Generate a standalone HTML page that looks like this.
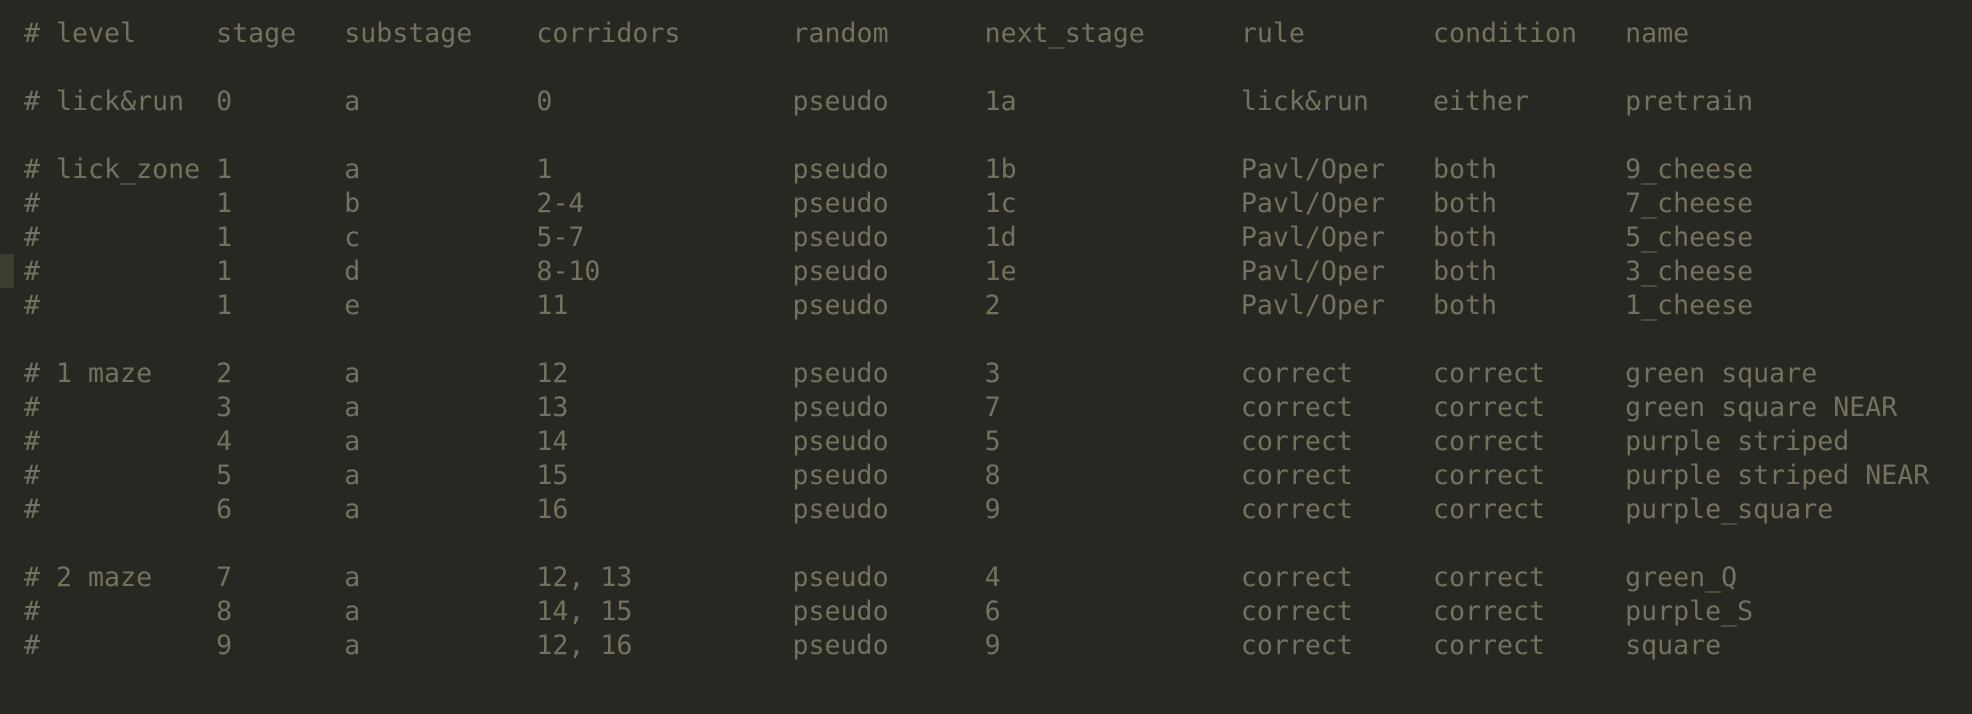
<!DOCTYPE html>
<html><head><meta charset="utf-8"><style>
html,body{margin:0;padding:0;background:#272822;width:1972px;height:714px;overflow:hidden;}
pre{margin:0;position:absolute;left:24px;top:17px;font-family:"DejaVu Sans Mono","Liberation Mono",monospace;font-size:26.6px;line-height:34px;color:#75715e;}
.g{position:absolute;left:0;top:254px;width:14px;height:34px;background:#3e3d32;}
</style></head><body>
<div class="g"></div>
<pre># level     stage   substage    corridors       random      next_stage      rule        condition   name

# lick&amp;run  0       a           0               pseudo      1a              lick&amp;run    either      pretrain

# lick_zone 1       a           1               pseudo      1b              Pavl/Oper   both        9_cheese
#           1       b           2-4             pseudo      1c              Pavl/Oper   both        7_cheese
#           1       c           5-7             pseudo      1d              Pavl/Oper   both        5_cheese
#           1       d           8-10            pseudo      1e              Pavl/Oper   both        3_cheese
#           1       e           11              pseudo      2               Pavl/Oper   both        1_cheese

# 1 maze    2       a           12              pseudo      3               correct     correct     green square
#           3       a           13              pseudo      7               correct     correct     green square NEAR
#           4       a           14              pseudo      5               correct     correct     purple striped
#           5       a           15              pseudo      8               correct     correct     purple striped NEAR
#           6       a           16              pseudo      9               correct     correct     purple_square

# 2 maze    7       a           12, 13          pseudo      4               correct     correct     green_Q
#           8       a           14, 15          pseudo      6               correct     correct     purple_S
#           9       a           12, 16          pseudo      9               correct     correct     square</pre>
</body></html>
